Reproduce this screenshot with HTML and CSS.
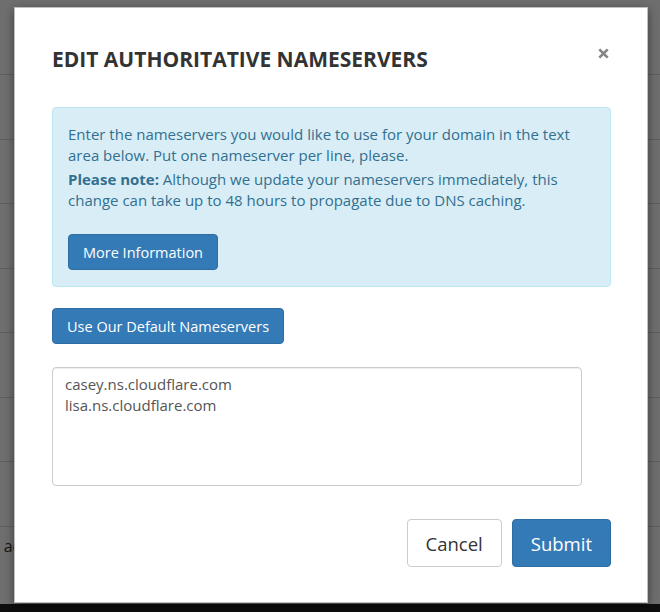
FILE: index.html
```html
<!DOCTYPE html>
<html lang="en">
<head>
<meta charset="utf-8">
<title>Edit Authoritative Nameservers</title>
<link rel="stylesheet" href="styles.css">
</head>
<body>
<div class="page">
  <div class="row row-first"></div>
  <div class="row"></div>
  <div class="row"></div>
  <div class="row"></div>
  <div class="row"></div>
  <div class="row"></div>
  <div class="row"></div>
  <div class="row"></div>
  <div class="row row-last"><span class="cell-text">r ac</span></div>
  <div class="page-footer"></div>
</div>

<div class="modal">
  <div class="modal-header">
    <h2 class="modal-title">EDIT AUTHORITATIVE NAMESERVERS</h2>
    <button class="close" type="button" aria-label="Close">
      <svg viewBox="0 0 10 10" width="11" height="11"><path d="M1.2 1.2 L8.8 8.8 M8.8 1.2 L1.2 8.8" stroke="#858585" stroke-width="2.4" fill="none"/></svg>
    </button>
  </div>
  <div class="alert">
    <p class="p-first">Enter the nameservers you would like to use for your domain in the text area below. Put one nameserver per line, please.</p>
    <p><strong>Please note:</strong> Although we update your nameservers immediately, this change can take up to 48 hours to propagate due to DNS caching.</p>
    <button class="btn btn-primary btn-info-more" type="button">More Information</button>
  </div>
  <button class="btn btn-primary btn-default-ns" type="button">Use Our Default Nameservers</button>
  <textarea class="ns-input">casey.ns.cloudflare.com
lisa.ns.cloudflare.com</textarea>
  <div class="modal-footer">
    <button class="btn btn-lg btn-cancel" type="button">Cancel</button>
    <button class="btn btn-lg btn-primary" type="button">Submit</button>
  </div>
</div>
</body>
</html>
```

FILE: styles.css
```css
* { box-sizing: border-box; }
html, body { margin: 0; padding: 0; }
body {
  width: 660px;
  height: 612px;
  overflow: hidden;
  position: relative;
  font-family: "Open Sans", "Liberation Sans", sans-serif;
  background: #6e6e6e;
}

.page {
  display: flex;
  flex-direction: column;
  height: 612px;
}
.row {
  height: 64.5px;
  border-bottom: 1px solid #5e5e5e;
  flex: none;
}
.row-first { height: 75px; }
.row-last {
  flex: 1;
  border-bottom: none;
  padding-top: 8px;
  overflow: hidden;
  white-space: nowrap;
}
.cell-text {
  display: block;
  font-size: 16px;
  color: #161616;
  margin-left: -7px;
}
.page-footer {
  height: 8px;
  background: #0e0e0e;
  flex: none;
}

.modal {
  position: absolute;
  left: 14px;
  top: 7px;
  width: 634px;
  height: 596px;
  background: #fff;
  border: 1px solid rgba(0,0,0,0.25);
  box-shadow: 0 3px 9px rgba(0,0,0,0.45);
  padding: 39px 36px 0 37px;
  display: flex;
  flex-direction: column;
  align-items: flex-start;
}

.modal-header {
  display: flex;
  justify-content: space-between;
  align-items: flex-start;
  width: 100%;
  height: 24px;
}
.modal-title {
  margin: 0;
  font-size: 21px;
  line-height: 24px;
  font-weight: 700;
  color: #333;
}
.close {
  border: 0;
  background: none;
  padding: 0;
  margin: 1px 2px 0 0;
  width: 11px;
  height: 11px;
  display: block;
}
.close svg { display: block; }

.alert {
  margin-top: 36px;
  width: 100%;
  background: #d9edf7;
  border: 1px solid #bce8f1;
  border-radius: 4px;
  color: #31708f;
  padding: 16px 15px 16px;
  font-size: 15px;
  line-height: 21px;
}
.alert p { margin: 0; }
.alert .p-first { margin-bottom: 3px; }
.alert strong { font-weight: 700; }

.btn {
  font-family: "Open Sans", "Liberation Sans", sans-serif;
  display: inline-flex;
  align-items: center;
  justify-content: center;
  height: 36px;
  padding: 0 14px;
  font-size: 14.5px;
  border-radius: 4px;
  border: 1px solid transparent;
  white-space: nowrap;
}
.btn-primary {
  background: #337ab7;
  border-color: #2e6da4;
  color: #fff;
}
.btn-info-more { margin-top: 23px; }
.btn-default-ns { margin-top: 21px; }

.ns-input {
  display: block;
  margin-top: 23px;
  width: 530px;
  height: 119px;
  padding: 6px 12px;
  font-family: "Open Sans", "Liberation Sans", sans-serif;
  font-size: 15px;
  line-height: 21px;
  color: #555;
  border: 1px solid #ccc;
  border-radius: 4px;
  box-shadow: inset 0 1px 1px rgba(0,0,0,0.075);
  resize: none;
  overflow: hidden;
}

.modal-footer {
  margin-top: 33px;
  width: 100%;
  display: flex;
  justify-content: flex-end;
  gap: 10px;
}
.btn-lg {
  height: 48px;
  font-size: 18.5px;
  padding: 0 18px;
}
.btn-cancel {
  background: #fff;
  border-color: #ccc;
  color: #333;
}
```
